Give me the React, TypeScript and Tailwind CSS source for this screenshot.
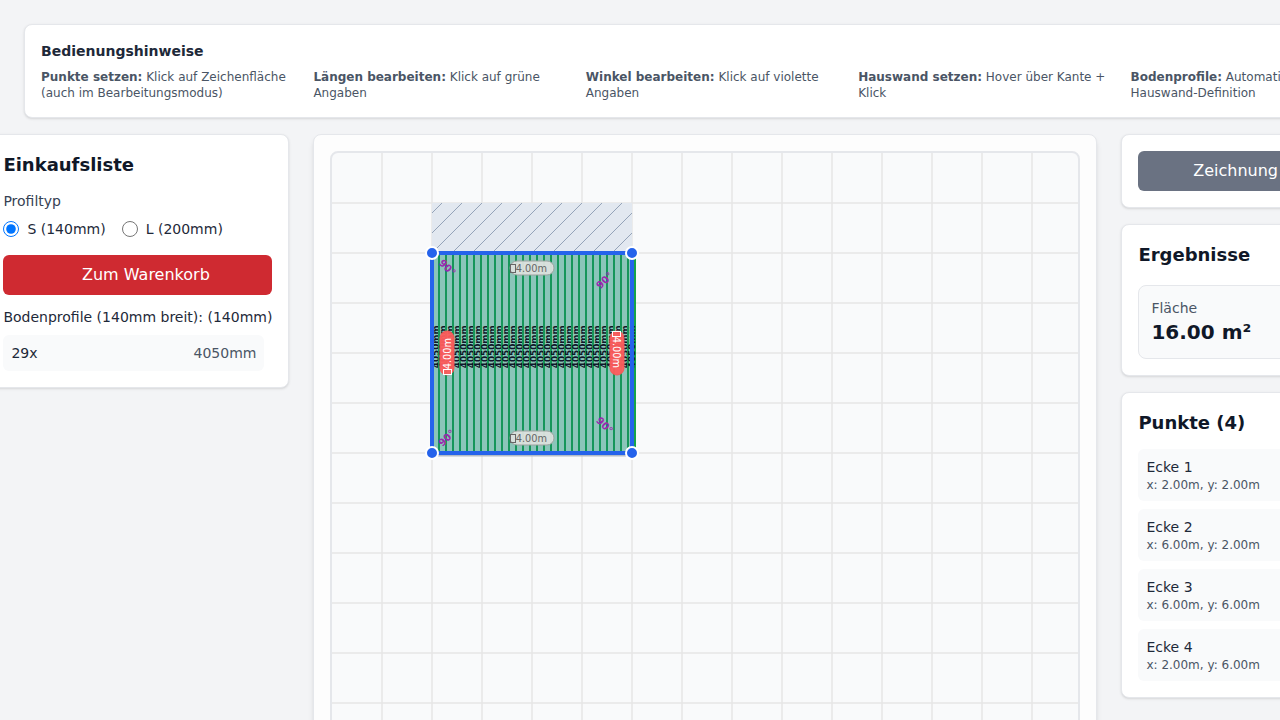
import React from 'react';

const hints = [
  ['Punkte setzen:', 'Klick auf Zeichenfläche (auch im Bearbeitungsmodus)'],
  ['Längen bearbeiten:', 'Klick auf grüne Angaben'],
  ['Winkel bearbeiten:', 'Klick auf violette Angaben'],
  ['Hauswand setzen:', 'Hover über Kante + Klick'],
  ['Bodenprofile:', 'Automatisch nach Hauswand-Definition'],
];

const points = [
  { x: 2, y: 2 },
  { x: 6, y: 2 },
  { x: 6, y: 6 },
  { x: 2, y: 6 },
];

const card = 'rounded-lg border border-gray-200 bg-white p-4 shadow-sm';
const GRID = 50;
const planks = Array.from({ length: 29 }, (_, i) => 100 + i * 7);

function Angle({ x, y, rotate }: { x: number; y: number; rotate: number }) {
  return (
    <text x={x} y={y} transform={`rotate(${rotate} ${x} ${y})`} textAnchor="middle" dominantBaseline="middle" fontSize="10" fontWeight="bold" fill="#9c27b0">
      90°
    </text>
  );
}

function Length({ x, y, rotate = 0, wall = false }: { x: number; y: number; rotate?: number; wall?: boolean }) {
  return (
    <g transform={`translate(${x} ${y}) rotate(${rotate})`}>
      <rect x="-22" y="-7" width="44" height="14" rx="7" fill={wall ? '#ff5c5c' : '#dde1de'} fillOpacity="0.95" stroke={wall ? '#f45858' : '#9ca3a0'} strokeWidth="1" />
      <rect x="-21.5" y="-3.5" width="5" height="8" fill="none" stroke={wall ? '#ffffff' : '#666666'} strokeWidth="1" />
      <text x="-16.3" y="4" fontSize="9.8" fill={wall ? '#ffffff' : '#666666'}>4.00m</text>
    </g>
  );
}

function Canvas() {
  return (
    <svg width="746" height="596" viewBox="0 0 746 596" className="block">
      <defs>
        <pattern id="wall" width="20" height="20" patternUnits="userSpaceOnUse">
          <path d="M 0 20 L 20 0" stroke="#94a3b8" strokeWidth="1" />
        </pattern>
      </defs>
      <g stroke="#e5e5e5" strokeWidth="2" strokeOpacity="0.75">
        {Array.from({ length: 14 }, (_, i) => (
          <path key={i} d={`M ${(i + 1) * GRID} 0 V 596`} />
        ))}
        {Array.from({ length: 11 }, (_, i) => (
          <path key={i} d={`M 0 ${(i + 1) * GRID} H 746`} />
        ))}
      </g>
      <rect x="100" y="50" width="200" height="50" fill="#e2e8f0" />
      <rect x="100" y="50" width="200" height="50" fill="url(#wall)" />
      {planks.map((x, i) => (
        <g key={x}>
          <rect x={x} y="100" width="7" height="201" fill="#8bc5b9" stroke="#16965a" strokeWidth="2" />
          {i === planks.length - 1 && <path d="M 303 100 V 302" stroke="#16a34a" strokeWidth="2" />}
          <text transform={`translate(${x + 7.2} 193.8) rotate(-90)`} textAnchor="middle" fontSize="8.8" fontWeight="bold" fill="#0f172a">
            4050mm
          </text>
        </g>
      ))}
      <path d="M 100 302.5 H 300" stroke="#b3bbc7" strokeWidth="2" />
      <rect x="100" y="100" width="200" height="200" fill="none" stroke="#2563eb" strokeWidth="4" />
      <Angle x={115} y={115} rotate={45} />
      <Angle x={272.8} y={127.8} rotate={-45} />
      <Angle x={272.3} y={272.7} rotate={45} />
      <Angle x={115} y={285.3} rotate={-45} />
      <Length x={200} y={115} />
      <Length x={200} y={285} />
      <Length x={115} y={200} rotate={-90} wall />
      <Length x={285} y={200} rotate={90} wall />
      {points.map((p) => (
        <circle key={`${p.x}-${p.y}`} cx={p.x * GRID} cy={p.y * GRID} r="6" fill="#2563eb" stroke="#ffffff" strokeWidth="2" />
      ))}
    </svg>
  );
}

export default function App() {
  return (
    <div className="h-screen w-full overflow-hidden bg-gray-100 font-['DejaVu_Sans',sans-serif] text-gray-800">
      <div className="w-[1408px] pt-6">
        <section className={`${card} ml-6 mb-4 h-[94px]`}>
          <h3 className="mb-2 text-sm font-semibold leading-5">Bedienungshinweise</h3>
          <div className="grid grid-cols-5 gap-3 text-xs text-gray-600">
            {hints.map(([title, text]) => (
              <p key={title}><strong>{title}</strong> {text}</p>
            ))}
          </div>
        </section>
        <main className="-ml-[13.6px] flex items-start gap-6">
          <aside className={`${card} w-[303px] shrink-0`}>
            <h2 className="mb-3 text-lg font-semibold leading-7 text-gray-900">Einkaufsliste</h2>
            <div className="mb-2 text-sm text-gray-700">Profiltyp</div>
            <div className="mb-4 flex gap-4 text-sm">
              <label className="flex items-center"><input type="radio" name="profile" defaultChecked className="mr-2 size-4" />S (140mm)</label>
              <label className="flex items-center"><input type="radio" name="profile" className="mr-2 size-4" />L (200mm)</label>
            </div>
            <button className="mb-3 h-10 w-full rounded-md bg-[#cf2a31] pl-4 text-white">Zum Warenkorb</button>
            <h3 className="mb-2 whitespace-nowrap text-sm">Bodenprofile (140mm breit): (140mm)</h3>
            <div className="mr-2 flex justify-between rounded-md bg-gray-50 p-2 text-sm">
              <span>29x</span><span className="text-gray-600">4050mm</span>
            </div>
          </aside>
          <section className="h-[636px] w-[784px] shrink-0 rounded-lg border border-gray-200 bg-[#fdfdfd] p-4 shadow-md">
            <div className="h-[600px] w-[750px] overflow-hidden rounded-lg border-2 border-gray-200 bg-gray-50"><Canvas /></div>
          </section>
          <aside className="flex w-[302.8px] shrink-0 flex-col gap-4">
            <section className={card}>
              <button className="h-10 w-full whitespace-nowrap rounded-md bg-gray-500 pl-[54.8px] text-left text-white">Zeichnung löschen</button>
            </section>
            <section className={card}>
              <h2 className="mb-4 text-lg font-semibold text-gray-900">Ergebnisse</h2>
              <div className="rounded-lg border border-gray-200 bg-gray-50 p-3">
                <div className="text-sm text-gray-600">Fläche</div>
                <div className="text-xl font-bold text-gray-900">16.00 m²</div>
              </div>
            </section>
            <section className={card}>
              <h2 className="mb-3 text-lg font-semibold text-gray-900">Punkte (4)</h2>
              <div className="flex flex-col gap-2">
                {points.map((p, i) => (
                  <div key={i} className="rounded-md bg-gray-50 p-2">
                    <div className="text-sm">Ecke {i + 1}</div>
                    <div className="text-xs text-gray-600">x: {p.x.toFixed(2)}m, y: {p.y.toFixed(2)}m</div>
                  </div>
                ))}
              </div>
            </section>
          </aside>
        </main>
      </div>
    </div>
  );
}
